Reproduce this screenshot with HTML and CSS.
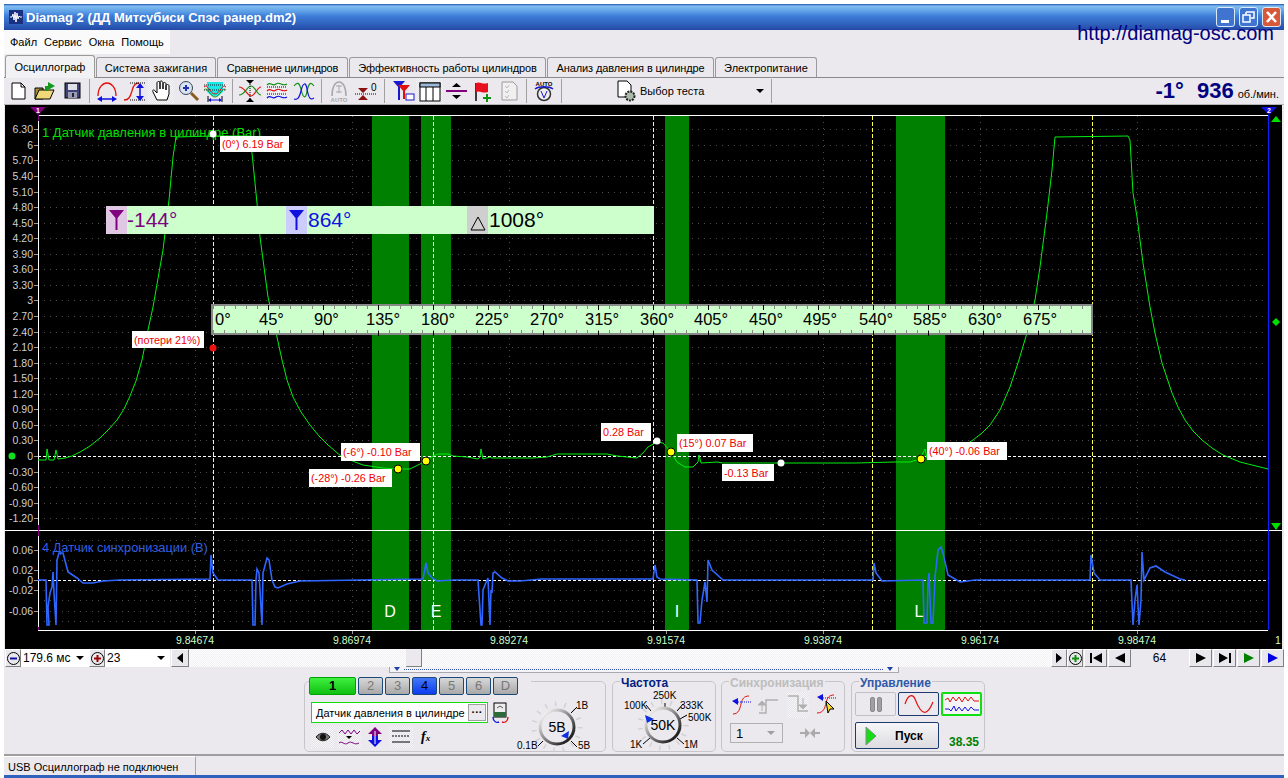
FILE: index.html
```html
<!DOCTYPE html>
<html lang="ru">
<head>
    <meta charset="utf-8">
    <link rel="stylesheet" href="styles.css">
    <title>Diamag 2</title>
</head>
<body>
<div class="window">
    <div class="titlebar">
        <svg class="appicon" width="14" height="14" viewBox="0 0 14 14"><rect width="14" height="14" fill="#1b2f80"/><path d="M1 7H3L4 4L5 10L6 2L7 12L8 3L9 9L10 6L11 7H13" fill="none" stroke="#fff"/></svg>
        <span class="title">Diamag 2 (ДД Митсубиси Спэс ранер.dm2)</span>
        <div class="winbtns">
            <div class="winbtn"><svg width="19" height="20"><rect x="5" y="13" width="8" height="3" fill="#fff"/></svg></div>
            <div class="winbtn"><svg width="19" height="20"><path d="M7 5H15V11H12M4 8H11V15H4Z M7 5V8" fill="none" stroke="#fff" stroke-width="1.5"/></svg></div>
            <div class="winbtn close"><svg width="19" height="20"><path d="M5 5L14 15M14 5L5 15" stroke="#fff" stroke-width="2.6"/></svg></div>
        </div>
    </div>
    <div class="site">http://diamag-osc.com</div>
    <div class="menu"><span>Файл</span><span>Сервис</span><span>Окна</span><span>Помощь</span></div>
    <div class="tabs">
        <div class="tab active t1">Осциллограф</div>
        <div class="tab t2">Система зажигания</div>
        <div class="tab t3">Сравнение цилиндров</div>
        <div class="tab t4">Эффективность работы цилиндров</div>
        <div class="tab t5">Анализ давления в цилиндре</div>
        <div class="tab t6">Электропитание</div>
    </div>

    <div class="toolbar">
        <div class="tool"><svg width="24" height="24"><path d="M6 4H15L19 8V20H6Z" fill="#fff" stroke="#000"/><path d="M15 4V8H19" fill="none" stroke="#000"/></svg></div>
        <div class="tool"><svg width="24" height="24"><path d="M2 9H10V20H2Z" fill="#a8913a" stroke="#000"/><path d="M2 20L6 11H21L17 20Z" fill="#f0d878" stroke="#000"/><path d="M15 3L22 7L15 11Z" fill="#129a1a"/><path d="M12 7H15V12H12Z" fill="#129a1a"/></svg></div>
        <div class="tool"><svg width="24" height="24"><rect x="5" y="4" width="15" height="15" fill="#42427a" stroke="#000"/><rect x="8" y="5" width="9" height="6" fill="#dfe0e8"/><rect x="8" y="13" width="9" height="6" fill="#9a9ab0"/><rect x="12" y="14" width="2" height="4" fill="#223"/></svg></div>
        <div class="sep"></div>
        <div class="tool"><svg width="24" height="24"><path d="M3 17C3 8 8 4 12 4C16 4 21 8 21 17" fill="none" stroke="#e01010" stroke-width="1.3"/><path d="M4 20H20" stroke="#1010e0" stroke-width="1.5"/><path d="M2 20L7 17V23ZM22 20L17 17V23Z" fill="#1010e0"/></svg></div>
        <div class="tool"><svg width="24" height="24"><path d="M2 21C7 21 8 18 10 12C11 7 13 4 17 4" fill="none" stroke="#e01010" stroke-width="1.3"/><path d="M8 4H23M8 21H23" stroke="#000" stroke-dasharray="1 1"/><path d="M18 7V18" stroke="#1010e0" stroke-width="1.5"/><path d="M18 4L22 9H14ZM18 22L22 17H14Z" fill="#1010e0"/></svg></div>
        <div class="tool on"><svg width="24" height="24"><path d="M8 21L4 13C3 11 5 10 6 12L8 14V4C8 2 11 2 11 4V10L11 3C11 1 14 2 14 4V10V5C14 3 17 3 17 5V11V7C17 5 20 5 20 7V15L18 21Z" fill="#fff" stroke="#000"/></svg></div>
        <div class="tool"><svg width="24" height="24"><path d="M15 14L22 21" stroke="#8a5a20" stroke-width="3"/><circle cx="10" cy="9" r="6.5" fill="#d8e4f4" stroke="#345"/><path d="M7 9H13M10 6V12" stroke="#2030b0" stroke-width="2"/></svg></div>
        <div class="tool"><svg width="24" height="24"><path d="M4 3H20V13L15 17H9L4 13Z" fill="#18e8e8"/><path d="M1 6H23M1 11H23" stroke="#222" stroke-dasharray="1 1"/><path d="M1 8C5 4 7 15 12 15C17 15 19 4 23 8" fill="none" stroke="#e01010"/><path d="M1 11C5 7 7 18 12 18C17 18 19 7 23 11" fill="none" stroke="#109010"/><path d="M7 21H17" stroke="#1010e0"/><path d="M5 21L8 19V23ZM19 21L16 19V23Z" fill="#1010e0"/><path d="M5 17V23M19 17V23" stroke="#000"/></svg></div>
        <div class="sep"></div>
        <div class="tool"><svg width="24" height="24"><path d="M1 8C7 8 9 17 13 17C17 17 19 8 23 8" fill="none" stroke="#e01010" stroke-width="1.2"/><path d="M1 16C7 16 9 7 13 7C17 7 19 16 23 16" fill="none" stroke="#109010" stroke-width="1.2"/><path d="M12 3V21" stroke="#000" stroke-dasharray="1 1"/><path d="M8 1H16L12 5ZM8 23H16L12 19Z" fill="#000"/></svg></div>
        <div class="tool on"><svg width="24" height="24"><path d="M2 6C6 2 7 8 11 5C15 2 17 8 22 5" fill="none" stroke="#109010" stroke-width="1.2"/><path d="M2 12C6 8 7 14 11 11C15 8 17 14 22 11" fill="none" stroke="#e01010" stroke-width="1.2"/><path d="M2 19C6 15 7 21 11 18C15 15 17 21 22 18" fill="none" stroke="#1010e0" stroke-width="1.2"/><path d="M2 8H22M2 15H22" stroke="#000" stroke-dasharray="1 1"/></svg></div>
        <div class="tool"><svg width="24" height="24"><path d="M2 7C5 3 7 3 9 10C11 20 14 20 15 12C17 3 19 3 22 7" fill="none" stroke="#109010" stroke-width="1.2"/><path d="M2 20C5 21 7 20 9 12C11 3 14 3 15 10C17 21 19 21 22 19" fill="none" stroke="#1010e0" stroke-width="1.2"/></svg></div>
        <div class="sep"></div>
        <div class="tool"><svg width="24" height="24"><path d="M5 17C5 8 8 3 12 3C16 3 19 8 19 17" fill="none" stroke="#a8a8a8" stroke-width="1.5"/><path d="M12 6V14" stroke="#a8a8a8"/><path d="M9 7H15M9 13H15" stroke="#a8a8a8"/><text x="12" y="23" class="tiny grey" text-anchor="middle">AUTO</text></svg></div>
        <div class="tool"><svg width="24" height="24"><path d="M4 9L14 9L9 14ZM4 21L14 21L9 16Z" fill="#8a0f0f"/><path d="M1 15H23" stroke="#000" stroke-dasharray="1 1"/><text x="17" y="12" class="tick">0</text></svg></div>
        <div class="sep sep-w"></div>
        <div class="tool"><svg width="24" height="24"><path d="M2 2H14L8 9Z" fill="#1818d0"/><path d="M8 7V21" stroke="#1818d0" stroke-width="2"/><path d="M7 6H19L13 13Z" fill="#e01010"/><path d="M13 11V20" stroke="#e01010" stroke-width="2"/><rect x="15" y="15" width="8" height="6" fill="#fff" stroke="#1818d0"/></svg></div>
        <div class="tool on"><svg width="24" height="24"><rect x="2" y="4" width="20" height="18" fill="#fff" stroke="#000"/><rect x="2" y="4" width="20" height="4" fill="#9bb8d8" stroke="#000"/><path d="M8 8V22M15 8V22" stroke="#000"/></svg></div>
        <div class="tool narrow"><svg width="24" height="24"><path d="M2 12H23" stroke="#800080" stroke-width="2"/><path d="M8 8H17L12.5 4ZM8 16H17L12.5 20Z" fill="#000"/></svg></div>
        <div class="tool"><svg width="24" height="24"><path d="M6 4V22" stroke="#000" stroke-width="1.5"/><path d="M6 4C10 2 12 6 18 4V13C12 15 10 11 6 13Z" fill="#e80f1e"/><path d="M13 19H21M17 15V23" stroke="#109010" stroke-width="2"/></svg></div>
        <div class="tool"><svg width="24" height="24"><path d="M5 3H16L20 7V21H5Z" fill="#f0f0f0" stroke="#999"/><path d="M8 7L10 9L12 6M8 12L10 14L12 11M8 17L10 19L12 16" fill="none" stroke="#bbb"/></svg></div>
        <div class="sep"></div>
        <div class="tool"><svg width="24" height="24"><text x="12" y="7" class="tiny" text-anchor="middle">AUTO</text><circle cx="12" cy="15" r="6.5" fill="#eee" stroke="#333" stroke-width="1.5"/><path d="M3 10C7 7 17 7 21 10" fill="none" stroke="#1818d0" stroke-width="1.5"/><path d="M9 12L12 19L15 12" fill="none" stroke="#1818d0"/></svg></div>
        <div class="sep"></div>
        <div class="testsel">
            <svg width="22" height="24"><path d="M2 2H11L15 6V18H2Z" fill="#fff" stroke="#000"/><circle cx="14" cy="17" r="4.5" fill="#a8bba8" stroke="#222" stroke-width="2" stroke-dasharray="2 1"/></svg>
            <span>Выбор теста</span>
            <i class="arrow"></i>
        </div>
        <div class="sep"></div>
        <div class="rpm"><b>-1°</b><b class="val">936</b><span>об./мин.</span></div>
    </div>

    <svg class="scope" width="1277" height="544" viewBox="5 105 1277 544">
        <rect x="5" y="105" width="1277" height="544" fill="#000"/>
        <!-- сетка -->
        <path class="grid crisp" d="M38 129H1268M38 145H1268M38 160H1268M38 176H1268M38 192H1268M38 207H1268M38 223H1268M38 238H1268M38 254H1268M38 269H1268M38 285H1268M38 300H1268M38 316H1268M38 332H1268M38 347H1268M38 363H1268M38 378H1268M38 394H1268M38 409H1268M38 425H1268M38 440H1268M38 472H1268M38 487H1268M38 503H1268M38 518H1268M38 540H1268M38 550H1268M38 560H1268M38 570H1268M38 590H1268M38 600H1268M38 611H1268M38 621H1268M195 116V630M352 116V630M509 116V630M666 116V630M823 116V630M980 116V630M1137 116V630"/>
        <!-- зоны -->
        <rect class="band" x="372" y="116" width="37" height="514"/>
        <rect class="band" x="421" y="116" width="30" height="514"/>
        <rect class="band" x="665" y="116" width="24" height="514"/>
        <rect class="band" x="896" y="116" width="49" height="514"/>
        <path class="marks crisp" d="M213 116V630M433 116V630M653 116V630M872 116V630M1092 116V630"/>
        <!-- оси -->
        <path class="ticks crisp" d="M34 129H38M34 145H38M34 160H38M34 176H38M34 192H38M34 207H38M34 223H38M34 238H38M34 254H38M34 269H38M34 285H38M34 300H38M34 316H38M34 332H38M34 347H38M34 363H38M34 378H38M34 394H38M34 409H38M34 425H38M34 440H38M34 456H38M34 472H38M34 487H38M34 503H38M34 518H38M34 550H38M34 570H38M34 580H38M34 590H38M34 611H38M195 630V634M352 630V634M509 630V634M666 630V634M823 630V634M980 630V634M1137 630V634"/>
        <path class="axis crisp" d="M38 115H1268M38 630H1268M5 530H1282M38 115V630"/>
        <path class="purple crisp" d="M38 115V121M38 525V536M38 627V630"/>
        <path class="blueline crisp" d="M1268 115V630"/>
        <path class="zero crisp" d="M38 456H1268M38 580H1268"/>
        <!-- кривые -->
        <polyline class="trace-green" points="38,460 46,460 47,449 49,460 54,460 56,450 58,459 65,458 72,456 80,452 90,446 100,438 109,429 117,420 124,409 130,396 136,381 142,360 148,330 153,307 163,250 169,200 173,157 176,137 213,136 249,136 252,153 257,203 260,237 268,297 277,337 282,360 287,380 293,397 301,412 310,425 319,436 328,445 342,457 363,465 383,468 398,469 410,469 422,463 433,456 438,454 448,454 453,456 467,457 478,459 480,457 481,449 483,459 490,457 492,458 533,458 547,457 557,454 607,454 617,456 637,458 643,453 648,447 657,442 663,443 671,452 677,462 685,467 693,467 698,462 699,455 701,463 717,462 723,463 855,463 895,462 910,462 920,459 925,449 927,458 945,456 960,448 973,440 982,433 990,425 1000,410 1010,387 1018,363 1027,333 1035,300 1040,267 1047,213 1052,170 1055,137 1128,136 1130,140 1133,193 1137,217 1143,263 1150,307 1155,333 1162,363 1172,393 1178,407 1185,420 1193,431 1202,440 1212,448 1223,455 1240,462 1268,469"/>
        <polyline class="trace-blue" points="38,580 46,580 47,625 49,625 48,607 50,593 52,587 53,572 54,593 56,625 57,560 59,553 63,553 68,572 77,578 83,583 93,583 103,581 120,580 210,579 211,555 213,573 218,580 252,580 253,625 255,625 256,580 257,569 259,573 262,625 263,573 267,558 269,560 272,580 275,587 278,588 287,584 300,581 423,579 426,563 428,573 432,578 437,581 453,580 478,580 481,625 482,625 483,590 485,585 488,578 490,625 491,590 492,593 493,573 495,572 502,578 508,581 520,581 542,579 653,579 655,565 657,577 660,579 697,580 698,623 700,623 702,600 705,582 707,602 708,560 712,570 723,580 873,580 874,563 876,573 882,581 923,580 924,623 927,623 928,583 929,573 931,623 933,623 935,577 938,550 941,547 943,553 948,575 960,582 975,580 1090,580 1091,555 1094,573 1100,580 1131,580 1133,625 1135,600 1137,585 1139,625 1141,600 1142,552 1144,580 1150,568 1156,566 1165,572 1180,579 1185,580"/>
        <!-- подписи шкалы -->
        <g class="scale">
            <text x="33" y="133">6.30</text><text x="33" y="149">6</text><text x="33" y="164">5.70</text><text x="33" y="180">5.40</text><text x="33" y="196">5.10</text><text x="33" y="211">4.80</text><text x="33" y="227">4.50</text><text x="33" y="242">4.20</text><text x="33" y="258">3.90</text><text x="33" y="273">3.60</text><text x="33" y="289">3.30</text><text x="33" y="304">3</text><text x="33" y="320">2.70</text><text x="33" y="336">2.40</text><text x="33" y="351">2.10</text><text x="33" y="367">1.80</text><text x="33" y="382">1.50</text><text x="33" y="398">1.20</text><text x="33" y="413">0.90</text><text x="33" y="429">0.60</text><text x="33" y="444">0.30</text><text x="33" y="460">0</text><text x="33" y="476">-0.30</text><text x="33" y="491">-0.60</text><text x="33" y="507">-0.90</text><text x="33" y="522">-1.20</text>
            <text x="33" y="554">0.06</text><text x="33" y="574">0.02</text><text x="33" y="584">0</text><text x="33" y="594">-0.02</text><text x="33" y="615">-0.06</text>
        </g>
        <g class="xscale">
            <text x="195" y="644">9.84674</text><text x="352" y="644">9.86974</text><text x="509" y="644">9.89274</text><text x="666" y="644">9.91574</text><text x="823" y="644">9.93874</text><text x="980" y="644">9.96174</text><text x="1137" y="644">9.98474</text><text x="1278" y="644">1</text>
        </g>
        <text class="chan1" x="42" y="137">1 Датчик давления в цилиндре (Bar)</text>
        <text class="chan4" x="42" y="552">4 Датчик синхронизации (В)</text>
        <g class="zone"><text x="390" y="617">D</text><text x="436" y="617">E</text><text x="677" y="617">I</text><text x="919" y="617">L</text></g>
        <!-- маркеры -->
        <path d="M30 107H46L38 115Z" fill="#800080"/><text class="mk" x="38" y="113">1</text>
        <path d="M1261 107H1277L1269 115Z" fill="#1010e0"/><text class="mk" x="1269" y="113">2</text>
        <circle cx="12" cy="456" r="3.5" fill="#10e020"/>
        <path d="M1271 122L1276 116L1281 122Z" fill="#00e000"/>
        <path d="M1276 318L1280 322L1276 326L1272 322Z" fill="#00e000"/>
        <path d="M1271 523H1281L1276 530Z" fill="#00e000"/>
        <!-- панель курсоров -->
        <rect x="106" y="206" width="548" height="28" fill="#ccffcc"/>
        <rect x="106" y="206" width="21" height="28" fill="#e0c8e4"/>
        <rect x="286" y="206" width="21" height="28" fill="#ccccff"/>
        <rect x="467" y="206" width="21" height="28" fill="#cfcfcf"/>
        <path d="M109 210H124L117.5 218V230H115.5V218Z" fill="#800080"/>
        <path d="M289 210H304L297.5 218V230H295.5V218Z" fill="#1010e0"/>
        <path d="M478 217L485 230H471Z" fill="none" stroke="#000"/>
        <text class="cur" x="127" y="227" fill="#800080">-144°</text>
        <text class="cur" x="308" y="227" fill="#1010e0">864°</text>
        <text class="cur" x="489" y="227" fill="#000">1008°</text>
        <!-- линейка углов -->
        <rect class="crisp" x="212" y="305" width="880" height="29" fill="#ccffcc" stroke="#888" stroke-width="1.6"/>
        <line class="rule crisp" x1="213" y1="307.5" x2="1092" y2="307.5"/>
        <line class="rule crisp" x1="213" y1="331.5" x2="1092" y2="331.5"/>
        <line class="rule-major crisp" x1="268" y1="307" x2="1092" y2="307"/>
        <line class="rule-major crisp" x1="268" y1="333" x2="1092" y2="333"/>
        <g class="deg"><text x="215" y="325">0°</text><text x="259" y="325">45°</text><text x="314" y="325">90°</text><text x="366" y="325">135°</text><text x="421" y="325">180°</text><text x="475" y="325">225°</text><text x="530" y="325">270°</text><text x="585" y="325">315°</text><text x="640" y="325">360°</text><text x="694" y="325">405°</text><text x="749" y="325">450°</text><text x="803" y="325">495°</text><text x="859" y="325">540°</text><text x="913" y="325">585°</text><text x="968" y="325">630°</text><text x="1023" y="325">675°</text></g>
        <!-- значения -->
        <g class="tag">
            <rect x="220" y="136" width="69" height="16"/><text x="222" y="148">(0°) 6.19 Bar</text>
            <rect x="132" y="331" width="72" height="17"/><text x="134" y="344">(потери 21%)</text>
            <rect x="341" y="443" width="79" height="18"/><text x="343" y="456">(-6°) -0.10 Bar</text>
            <rect x="309" y="469" width="83" height="18"/><text x="311" y="482">(-28°) -0.26 Bar</text>
            <rect x="601" y="423" width="50" height="18"/><text x="603" y="436">0.28 Bar</text>
            <rect x="677" y="434" width="76" height="18"/><text x="679" y="447">(15°) 0.07 Bar</text>
            <rect x="722" y="464" width="52" height="17"/><text x="724" y="477">-0.13 Bar</text>
            <rect x="927" y="442" width="80" height="18"/><text x="929" y="455">(40°) -0.06 Bar</text>
        </g>
        <circle cx="213" cy="134" r="3.5" fill="#fff"/><circle cx="657" cy="441" r="3.5" fill="#fff"/><circle cx="781" cy="463" r="3.5" fill="#fff"/>
        <circle cx="213" cy="348" r="3.5" fill="#f01010"/>
        <circle class="pt" cx="398" cy="469" r="4"/><circle class="pt" cx="426" cy="461" r="4"/><circle class="pt" cx="671" cy="452" r="4"/><circle class="pt" cx="921" cy="459" r="4"/>
    </svg>

    <div class="strip">
        <div class="sq"><svg width="15" height="15"><circle cx="7.5" cy="7.5" r="6" fill="#e8e8ec" stroke="#000"/><path d="M4 7.5H11" stroke="#1010a0" stroke-width="2"/></svg></div>
        <div class="combo w1">179.6 мс<i class="arrow"></i></div>
        <div class="sq"><svg width="15" height="15"><circle cx="7.5" cy="7.5" r="6" fill="#e8e8ec" stroke="#000"/><path d="M4 7.5H11M7.5 4V11" stroke="#900" stroke-width="2"/></svg></div>
        <div class="combo w2">23<i class="arrow"></i></div>
        <div class="sq lb"><i class="tri-l"></i></div>
        <div class="track"><div class="thumb"></div></div>
        <div class="sq"><i class="tri-r"></i></div>
        <div class="sq"><svg width="15" height="15"><circle cx="7.5" cy="7.5" r="6" fill="#e8e8ec" stroke="#000"/><path d="M4 7.5H11M7.5 4V11" stroke="#109010" stroke-width="2"/></svg></div>
        <div class="nav"><svg width="12" height="10"><path d="M0 0H2V10H0ZM12 0V10L3 5Z"/></svg></div>
        <div class="nav"><i class="tri-l big"></i></div>
        <div class="page">64</div>
        <div class="nav"><i class="tri-r big"></i></div>
        <div class="nav"><svg width="12" height="10"><path d="M0 0V10L9 5ZM10 0H12V10H10Z"/></svg></div>
        <div class="nav"><i class="tri-r big green"></i></div>
        <div class="nav"><i class="tri-r big blue"></i></div>
    </div>
    <div class="subbar"><i class="dn"></i><div class="dots"></div><i class="dn"></i></div>

    <div class="panels">
        <div class="group g-chan">
            <div class="channels">
                <div class="ch first">1</div><div class="ch">2</div><div class="ch">3</div><div class="ch cur4">4</div><div class="ch">5</div><div class="ch">6</div><div class="ch">D</div>
            </div>
            <div class="chan-body">
                <div class="chan-left">
                    <div class="sensor">
                        <div class="sensor-box">Датчик давления в цилиндре<div class="dotsbtn">···</div></div>
                        <svg width="19" height="22"><rect x="3" y="1" width="12" height="14" fill="#eee" stroke="#000"/><rect x="3" y="10" width="12" height="5" fill="#2c6a3a"/><path d="M6 6L9 4L12 6" stroke="#555" fill="none"/><path d="M2 15C2 20 6 21 8 20" stroke="#1010e0" fill="none" stroke-width="1.4"/><path d="M17 15C17 20 13 21 11 20" stroke="#e01010" fill="none" stroke-width="1.4"/></svg>
                    </div>
                    <div class="chan-tools">
                        <div class="tbtn on"><svg width="20" height="20"><path d="M3 10C7 5 13 5 17 10C13 15 7 15 3 10Z" fill="#777" stroke="#222"/><circle cx="10" cy="10" r="3" fill="#111"/></svg></div>
                        <div class="tbtn on"><svg width="24" height="20"><path d="M2 6L5 3L8 7L11 3L14 7L17 3L20 7L23 4" fill="none" stroke="#800080"/><path d="M2 16C5 13 7 19 11 16C15 13 17 19 22 16" fill="none" stroke="#800080"/><path d="M9 9H15L12 12Z"/></svg></div>
                        <div class="tbtn"><svg width="20" height="22"><path d="M10 1L17 8H13V12H7V8H3Z" fill="#800080"/><path d="M10 21L17 14H13V10H7V14H3Z" fill="#1010e0"/><path d="M10 5V18" stroke="#fff"/></svg></div>
                        <div class="tbtn on"><svg width="22" height="20"><path d="M2 4H20M2 15H20" stroke="#000"/><path d="M2 9H20" stroke="#000" stroke-dasharray="2 1"/></svg></div>
                        <div class="fx">f<sub>x</sub></div>
                    </div>
                </div>
                <svg class="knob" width="92" height="57">
                    <circle cx="45" cy="32" r="23" class="kticks"/>
                    <path d="M59 18L65 12M59 46L65 52M31 46L26 51" stroke="#000"/>
                    <circle cx="45" cy="32" r="17" fill="#ebe9ed" stroke="url(#ring)" stroke-width="3"/>
                    <path d="M49 41L57 36L56 44Z" fill="#1030e0"/>
                    <text class="kval" x="45" y="37" text-anchor="middle">5В</text>
                    <text class="klab" x="64" y="14">1В</text><text class="klab" x="5" y="54">0.1В</text><text class="klab" x="66" y="54">5В</text>
                    <defs><linearGradient id="ring" x1="0" y1="0" x2="1" y2="1"><stop offset=".1" stop-color="#f4f4f4"/><stop offset=".85" stop-color="#222"/></linearGradient></defs>
                </svg>
            </div>
        </div>

        <div class="group g-freq">
            <div class="gtitle navy">Частота</div>
            <svg class="knob fknob" width="102" height="60">
                <circle cx="50" cy="33" r="23" class="kticks"/>
                <path d="M52 11V18M38 19L33 13M64 19L70 12M67 27L74 23M37 46L30 52M64 46L71 52" stroke="#000"/>
                <circle cx="50" cy="33" r="17" fill="#ebe9ed" stroke="url(#ring)" stroke-width="3"/>
                <path d="M32 23L41 27L34 31Z" fill="#1030e0"/>
                <text class="kval" x="50" y="38" text-anchor="middle">50K</text>
                <text class="klab" x="40" y="7">250K</text><text class="klab" x="11" y="17">100K</text><text class="klab" x="67" y="17">333K</text><text class="klab" x="75" y="29">500K</text><text class="klab" x="17" y="56">1K</text><text class="klab" x="71" y="56">1M</text>
            </svg>
        </div>

        <div class="group g-sync">
            <div class="gtitle grey">Синхронизация</div>
            <div class="sync-row">
                <svg width="20" height="22"><path d="M2 20C8 20 9 14 10 10C11 5 13 2 18 2" fill="none" stroke="#e01010"/><path d="M1 6L7 10V3Z" fill="#1010e0" transform="translate(0 1)"/><path d="M7 8H20" stroke="#1010e0" stroke-dasharray="1 1"/></svg>
                <svg width="22" height="22"><path d="M1 19H8V6H20" fill="none" stroke="#b0b0b0" stroke-width="1.5"/><path d="M12 9V17M8 11H16L12 7Z" fill="#b0b0b0" stroke="#b0b0b0" transform="translate(-8 0)"/></svg>
                <div class="sync-on"><svg width="22" height="22"><path d="M1 4H11V19H21" fill="none" stroke="#b0b0b0" stroke-width="1.5"/><path d="M16 6V14M12 13H20L16 17Z" fill="#b0b0b0" stroke="#b0b0b0"/></svg></div>
                <svg width="22" height="24"><path d="M1 20C8 20 9 14 10 10C11 5 13 2 18 2" fill="none" stroke="#e01010"/><path d="M1 4L7 8V1Z" fill="#1010e0"/><path d="M7 5H20" stroke="#1010e0" stroke-dasharray="1 1"/><path d="M10 8L18 16H14L12 20Z" fill="#ffe020" stroke="#000"/></svg>
            </div>
            <div class="sync-row2">
                <div class="sync-combo">1<i class="arrow pale"></i></div>
                <svg width="20" height="10"><path d="M0 5H8M12 5H20" stroke="#aaa" stroke-width="2"/><path d="M5 0L10 5L5 10ZM15 0L10 5L15 10Z" fill="#aaa"/></svg>
            </div>
        </div>

        <div class="group g-ctl">
            <div class="gtitle blue">Управление</div>
            <div class="ctl-row">
                <div class="cbtn pause"><i></i><i></i></div>
                <div class="cbtn dark"><svg width="30" height="22"><path d="M1 11C4 1 9 1 11 6C14 14 18 21 22 19C26 17 27 13 29 9" fill="none" stroke="#e01010" stroke-width="1.2"/></svg></div>
                <div class="cbtn greenb"><svg width="36" height="20"><path d="M1 6L4 4L6 8L9 3L12 7L15 3L18 8L21 3L24 7L27 3L30 7H35" fill="none" stroke="#e01010"/><path d="M1 15H5L7 17L10 12L12 17L15 13L18 17L21 13L24 17L27 13L30 16H35" fill="none" stroke="#1010e0"/></svg></div>
            </div>
            <div class="ctl-row2">
                <div class="start"><svg width="12" height="20"><path d="M1 1L11 10L1 19Z" fill="#10e010" stroke="#888"/></svg><b>Пуск</b></div>
                <div class="num">38.35</div>
            </div>
        </div>
    </div>

    <div class="status"><div class="status-text">USB Осциллограф не подключен</div></div>
    <div class="bottomline"></div>
</div>
</body>
</html>
```

FILE: styles.css
```css
* {
    box-sizing: border-box;
    font-family: "Liberation Sans", Arial, sans-serif;
}
body {
    margin: 0;
    background: #fff;
}
.window {
    position: relative;
    width: 1280px;
    height: 774px;
    margin: 4px 0 0 4px;
    background: #ebe9ed;
}

/* title */
.titlebar {
    display: flex;
    align-items: center;
    height: 26px;
    padding-left: 5px;
    background: linear-gradient(#2050b0 0, #7fbdf0 2px, #5a9ce6 8px, #3d7dd8 12px, #2f62bd 20px, #2349a6 26px);
}
.appicon {
    margin-right: 3px;
}
.title {
    color: #fff;
    font-size: 13px;
    font-weight: bold;
}
.winbtns {
    display: flex;
    gap: 4px;
    margin-left: auto;
    margin-right: 3px;
}
.winbtn {
    width: 19px;
    height: 20px;
    border: 1px solid #dbe8f8;
    border-radius: 3px;
    background: #3f74d0;
}
.winbtn svg {
    display: block;
    margin: -1px;
}
.close {
    background: #d8593a;
}
.site {
    position: absolute;
    top: 18px;
    right: 10px;
    color: #000080;
    font-size: 20px;
}
.menu {
    display: flex;
    align-items: center;
    width: 166px;
    height: 24px;
    padding-left: 6px;
    background: #fafafa;
    font-size: 11px;
}
.menu span {
    margin-right: 7px;
}

/* tabs */
.tabs {
    display: flex;
    align-items: flex-end;
    height: 23px;
    padding-left: 1px;
    gap: 1px;
}
.tab {
    height: 20px;
    padding-top: 4px;
    border: 1px solid #9a9a9a;
    border-bottom: 0;
    border-radius: 3px 3px 0 0;
    background: #ebe9ed;
    font-size: 11px;
    text-align: center;
    white-space: nowrap;
}
.tab.active {
    height: 23px;
    padding-top: 5px;
    background: #f2f1f4;
    margin-bottom: -1px;
    position: relative;
}
.t1 {
    width: 90px;
}
.t2 {
    width: 120px;
    letter-spacing: .15px;
}
.t3 {
    width: 131px;
    letter-spacing: -.2px;
}
.t4 {
    width: 197px;
    letter-spacing: -.1px;
}
.t5 {
    width: 167px;
    letter-spacing: -.1px;
}
.t6 {
    width: 102px;
}

/* toolbar */
.toolbar {
    display: flex;
    align-items: center;
    height: 28px;
    border-top: 1px solid #8a8a8a;
    border-bottom: 1px solid #b5b5b5;
}
.tool {
    display: flex;
    justify-content: center;
    align-items: center;
    flex: none;
    width: 27px;
    height: 26px;
}
.tool.narrow {
    width: 25px;
}
.tool svg {
    display: block;
}
.tool.on, .tbtn.on, .sync-on {
    background: repeating-conic-gradient(#f6f6f8 0 25%, #e4e4e8 0 50%) 0 0/2px 2px;
}
.sep {
    flex: none;
    width: 8px;
    height: 24px;
    background: linear-gradient(#a0a0a0, #a0a0a0) center/1px 100% no-repeat;
}
.sep-w {
    width: 10px;
}
.testsel {
    display: flex;
    align-items: center;
    flex: none;
    width: 202px;
    padding-left: 51px;
    font-size: 11px;
}
.testsel span {
    margin-left: 2px;
}
.arrow {
    display: inline-block;
    border-left: 4px solid transparent;
    border-right: 4px solid transparent;
    border-top: 4px solid #000;
}
.testsel .arrow {
    margin-left: auto;
    margin-right: 3px;
}
.rpm {
    display: flex;
    align-items: baseline;
    margin-left: auto;
    padding-right: 5px;
    color: #000080;
}
.rpm b {
    font-size: 22px;
}
.rpm .val {
    margin-left: 13px;
}
.rpm span {
    margin-left: 4px;
    color: #000;
    font-size: 11px;
}
.tiny {
    font-size: 6px;
    font-weight: bold;
}
.grey {
    fill: #a8a8a8;
    color: #bdbdbd;
}
.tick {
    font-size: 10px;
}

/* oscillogram */
.scope {
    display: block;
    margin-left: 1px;
    width: 1277px;
    height: 544px;
}
.crisp {
    shape-rendering: crispEdges;
}
.grid {
    fill: none;
    stroke: #4c4c4c;
    stroke-dasharray: 1 5;
}
.band {
    fill: #008000;
}
.marks {
    fill: none;
    stroke: #ffff50;
    stroke-dasharray: 4 2;
}
.ticks {
    fill: none;
    stroke: #999;
}
.axis {
    fill: none;
    stroke: #fff;
}
.purple {
    fill: none;
    stroke: #800080;
}
.blueline {
    fill: none;
    stroke: #1020ff;
}
.zero {
    fill: none;
    stroke: #fff;
    stroke-dasharray: 3 2;
}
.trace-green {
    fill: none;
    stroke: #00f010;
    stroke-linejoin: round;
}
.trace-blue {
    fill: none;
    stroke: #2f66ff;
    stroke-width: 1.6;
}
.scale text {
    fill: #d0d0d0;
    font-size: 10.5px;
    text-anchor: end;
}
.xscale text {
    fill: #ccffcc;
    font-size: 10.5px;
    text-anchor: middle;
}
.chan1 {
    fill: #00e000;
    font-size: 13px;
}
.chan4 {
    fill: #2f5fe0;
    font-size: 12.8px;
}
.zone text {
    fill: #fff;
    font-size: 16px;
    text-anchor: middle;
}
.mk {
    fill: #fff;
    font-size: 7px;
    font-weight: bold;
    text-anchor: middle;
}
.cur {
    font-size: 21px;
}
.rule {
    stroke: #888;
    stroke-width: 3;
    stroke-dasharray: 1 10;
}
.rule-major {
    stroke: #000;
    stroke-width: 5;
    stroke-dasharray: 1 54;
}
.deg text {
    fill: #000;
    font-size: 16.5px;
}
.tag rect {
    fill: #fff;
}
.tag text {
    fill: #f00000;
    font-size: 10.8px;
}
.pt {
    fill: #ffff00;
    stroke: #000;
}

/* strip under chart */
.strip {
    display: flex;
    height: 18px;
    margin-left: 1px;
}
.sq {
    display: flex;
    justify-content: center;
    align-items: center;
    flex: none;
    width: 16px;
    height: 18px;
    background: #e8e8ec;
    border: 1px solid;
    border-color: #fff #808080 #808080 #fff;
}
.combo {
    display: flex;
    align-items: center;
    flex: none;
    height: 18px;
    padding: 0 5px 0 2px;
    background: #fff;
    font-size: 12px;
}
.combo .arrow {
    margin-left: auto;
}
.w1 {
    width: 68px;
}
.w2 {
    width: 65px;
    padding-left: 2px;
}
.lb {
    width: 18px;
    margin-left: 1px;
}
.tri-l, .tri-r {
    display: inline-block;
    border-top: 5px solid transparent;
    border-bottom: 5px solid transparent;
}
.tri-l {
    border-right: 6px solid #000;
}
.tri-r {
    border-left: 6px solid #000;
}
.tri-r.big {
    border-left-width: 10px;
}
.tri-l.big {
    border-right-width: 10px;
}
.green {
    border-left-color: #008000;
}
.blue {
    border-left-color: #0000e0;
}
.track {
    flex: 1;
    height: 18px;
    padding-left: 217px;
    background: repeating-conic-gradient(#f0f0f2 0 25%, #fff 0 50%) 0 0/2px 2px;
}
.thumb {
    width: 16px;
    height: 18px;
    background: #ebe9ed;
    border-right: 1px solid #808080;
    border-bottom: 1px solid #808080;
}
.nav {
    display: flex;
    justify-content: center;
    align-items: center;
    flex: none;
    width: 23px;
    height: 18px;
    margin-left: 1px;
    background: #e8e8ec;
    border: 1px solid;
    border-color: #fff #808080 #808080 #fff;
}
.page {
    flex: none;
    width: 57px;
    font-size: 12px;
    line-height: 18px;
    text-align: center;
}
.subbar {
    display: flex;
    align-items: center;
    justify-content: space-between;
    width: 510px;
    height: 7px;
    margin: -1px 0 0 385px;
    padding: 0 5px 0 4px;
    background: #f4f4f6;
    border: 1px solid #a8a8b0;
    border-top: 0;
}
.dn {
    border-left: 3px solid transparent;
    border-right: 3px solid transparent;
    border-top: 4px solid #2040b0;
}
.dots {
    flex: 1;
    margin: 0 4px;
    border-top: 1px dotted #3050b0;
}

/* bottom groups */
.panels {
    display: flex;
    margin: 8px 0 0 300px;
}
.group {
    flex: none;
    height: 71px;
    margin-right: 6px;
    border: 1px solid #c6c6ca;
    border-radius: 5px;
}
.g-chan {
    width: 302px;
    padding-left: 4px;
}
.g-freq {
    width: 104px;
    margin-right: 5px;
}
.g-sync {
    width: 124px;
}
.g-ctl {
    width: 134px;
}
.channels {
    display: flex;
    gap: 2px;
    width: 222px;
    margin-top: -5px;
    padding-right: 8px;
    background: #ebe9ed;
}
.ch {
    width: 25px;
    height: 18px;
    border: 1px solid #1c4a78;
    border-radius: 2px;
    background: linear-gradient(#d8d8d8, #a8a8a8);
    color: #777;
    font-size: 13px;
    line-height: 16px;
    text-align: center;
}
.ch.first {
    width: 47px;
    border-color: #00a000;
    background: linear-gradient(#40f040, #10c010);
    color: #000;
    font-weight: bold;
}
.ch.cur4 {
    background: linear-gradient(#4478f8, #0c3cf0);
    color: #000;
}
.chan-body {
    display: flex;
}
.chan-left {
    flex: none;
    width: 203px;
    padding: 7px 0 0 2px;
}
.sensor {
    display: flex;
    gap: 3px;
}
.sensor-box {
    display: flex;
    align-items: center;
    justify-content: space-between;
    width: 177px;
    height: 21px;
    padding: 0 1px 0 4px;
    background: #fff;
    border: 1px solid #10e010;
    font-size: 11px;
    white-space: nowrap;
}
.dotsbtn {
    width: 18px;
    height: 17px;
    border: 1px solid #a0a0a0;
    background: #ebe9ed;
    font-size: 11px;
    font-weight: bold;
    line-height: 14px;
    text-align: center;
}
.chan-tools {
    display: flex;
    align-items: center;
    gap: 2px;
    margin-top: 2px;
}
.tbtn {
    display: flex;
    justify-content: center;
    align-items: center;
    width: 24px;
    height: 22px;
}
.fx {
    margin-left: 6px;
    font-family: "Liberation Serif", serif;
    font-size: 14px;
    font-style: italic;
    font-weight: bold;
}
.fx sub {
    font-family: inherit;
    font-size: 9px;
    vertical-align: baseline;
}
.knob {
    display: block;
    flex: none;
    overflow: visible;
}
.fknob {
    margin-top: 1px;
}
.kticks {
    fill: none;
    stroke: #d0d0d0;
    stroke-width: 5;
    stroke-dasharray: 1.4 8.2;
}
.kval {
    font-size: 14px;
}
.klab {
    font-size: 10px;
}
.gtitle {
    width: fit-content;
    margin: -7px 0 0 7px;
    padding: 0 1px;
    background: #ebe9ed;
    font-size: 12px;
    font-weight: bold;
    line-height: 16px;
}
.navy {
    color: #002080;
}
.gtitle.grey {
    color: #bdbdbd;
}
.gtitle.blue {
    color: #3058a8;
    border: 0;
}
.sync-row {
    display: flex;
    justify-content: space-between;
    align-items: center;
    height: 24px;
    margin-top: 2px;
    padding: 0 6px 0 9px;
}
.sync-row2 {
    display: flex;
    align-items: center;
    gap: 17px;
    margin: 6px 0 0 8px;
}
.sync-combo {
    display: flex;
    align-items: center;
    justify-content: space-between;
    width: 53px;
    height: 20px;
    padding: 0 7px 0 5px;
    border: 1px solid #b0b0b0;
    font-size: 13px;
}
.pale {
    border-top-color: #a0a0a0;
}
.ctl-row {
    display: flex;
    gap: 2px;
    margin: 1px 0 0 3px;
}
.cbtn {
    display: flex;
    justify-content: center;
    align-items: center;
    width: 41px;
    height: 24px;
    border-radius: 2px;
    border: 1px solid #c0c0c4;
}
.pause {
    gap: 2px;
}
.pause i {
    width: 5px;
    height: 15px;
    border-radius: 2px;
    background: #a0a0a4;
    border: 1px solid #888;
}
.dark {
    border-color: #1c3a70;
}
.greenb {
    border: 2px solid #10e010;
    background: #f4f4f6;
}
.ctl-row2 {
    display: flex;
    margin: 6px 0 0 3px;
}
.start {
    display: flex;
    align-items: center;
    width: 84px;
    height: 27px;
    padding-left: 9px;
    border: 1px solid #1c3a70;
    border-radius: 2px;
    background: linear-gradient(#f6f6f8, #dcdce0);
}
.start b {
    margin-left: 18px;
    font-size: 12px;
}
.num {
    margin: 13px 0 0 10px;
    color: #008000;
    font-size: 12px;
    font-weight: bold;
}
.status {
    height: 21px;
    margin-top: 2px;
    border-top: 2px solid #9e9e9e;
}
.status-text {
    width: 192px;
    height: 19px;
    padding: 4px 0 0 4px;
    border-top: 1px solid #fff;
    border-right: 1px solid #a8a8a8;
    font-size: 11px;
}
.bottomline {
    height: 4px;
    background: #2f62bd;
}
```
